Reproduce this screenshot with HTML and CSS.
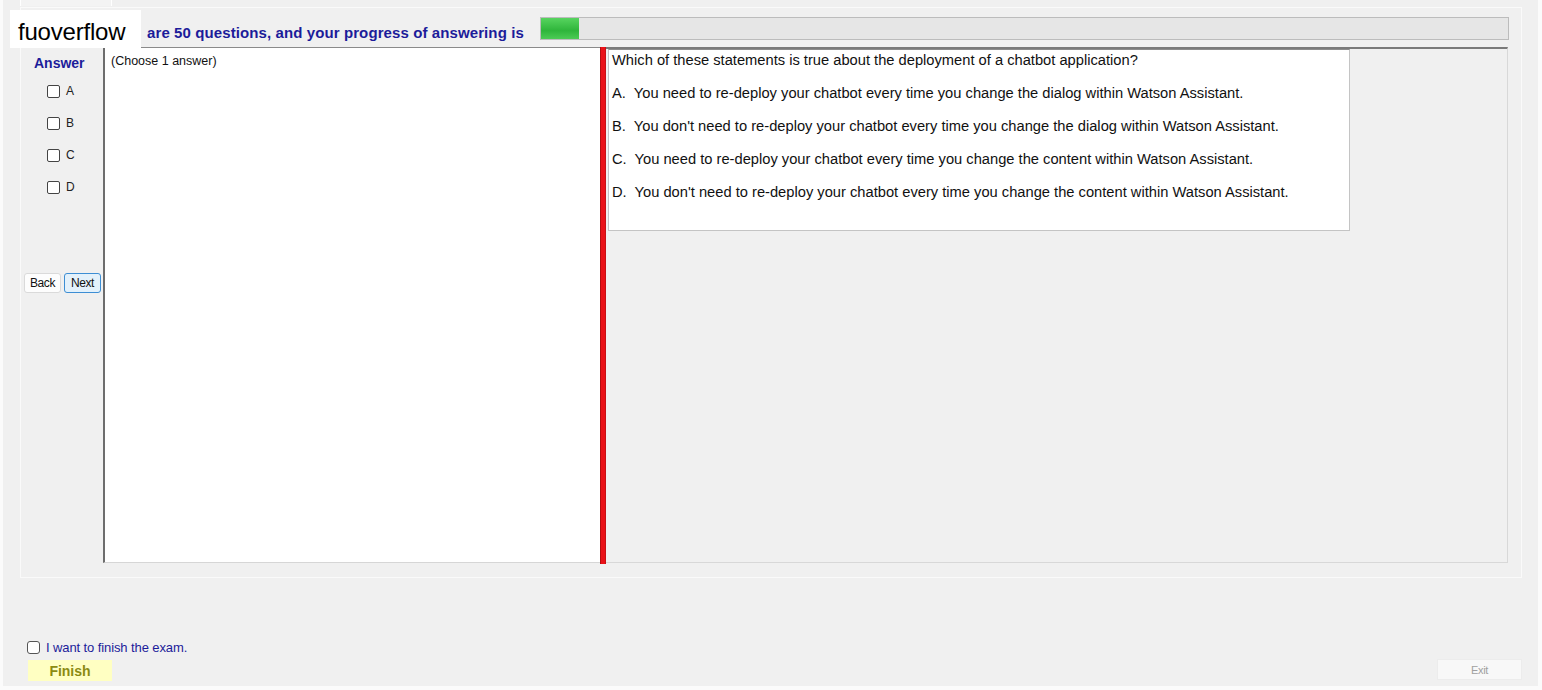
FILE: index.html
```html
<!DOCTYPE html>
<html lang="en">
<head>
    <meta charset="UTF-8">
    <title>Exam</title>
    <link rel="stylesheet" href="styles.css">
</head>
<body>
    <div class="window">
        <div class="tab"></div>

        <div class="panel">
            <div class="brand">fuoverflow</div>

            <div class="header">
                <span class="progress-text">are 50 questions, and your progress of answering is</span>
                <div class="progress"><div class="progress-fill" style="width: 38px"></div></div>
            </div>

            <div class="main">
                <div class="answers">
                    <div class="answers-title">Answer</div>
                    <label class="choice"><span class="box"></span>A</label>
                    <label class="choice"><span class="box"></span>B</label>
                    <label class="choice"><span class="box"></span>C</label>
                    <label class="choice"><span class="box"></span>D</label>
                    <div class="nav">
                        <button class="btn">Back</button>
                        <button class="btn btn-next">Next</button>
                    </div>
                </div>

                <div class="note">(Choose 1 answer)</div>

                <div class="splitter"></div>

                <div class="question-area">
                    <div class="question">
                        <p>Which of these statements is true about the deployment of a chatbot application?</p>
                        <p>A.&nbsp; You need to re-deploy your chatbot every time you change the dialog within Watson Assistant.</p>
                        <p>B.&nbsp; You don't need to re-deploy your chatbot every time you change the dialog within Watson Assistant.</p>
                        <p>C.&nbsp; You need to re-deploy your chatbot every time you change the content within Watson Assistant.</p>
                        <p>D.&nbsp; You don't need to re-deploy your chatbot every time you change the content within Watson Assistant.</p>
                    </div>
                </div>
            </div>
        </div>

        <div class="footer">
            <div class="finish-group">
                <label class="finish-check"><span class="box"></span>I want to finish the exam.</label>
                <button class="btn-finish">Finish</button>
            </div>
            <button class="btn-exit">Exit</button>
        </div>
    </div>
</body>
</html>
```

FILE: styles.css
```css
:root {
    --navy: #1c1c9a;
    --bg: #f0f0f0;
}

* {
    box-sizing: border-box;
}

body {
    margin: 0;
    background: #fbfbfb;
    font-family: 'Liberation Sans', Arial, sans-serif;
}

.window {
    position: relative;
    width: 1535px;
    height: 686px;
    margin-left: 3px;
    background: var(--bg);
    display: flex;
    flex-direction: column;
}

.tab {
    width: 92px;
    height: 6px;
    margin-left: 17px;
    border-left: 1px solid #fff;
    border-right: 1px solid #fff;
    background: #f3f3f3;
}

.panel {
    width: 1502px;
    height: 571px;
    margin: 1px 0 0 17px;
    border: 1px solid #fafafa;
    padding: 0 13px 0 1px;
}

/* watermark sits on top of the header text */
.brand {
    position: absolute;
    left: 7px;
    top: 10px;
    width: 131px;
    height: 38px;
    background: #fff;
    color: #000;
    font-size: 24px;
    line-height: 43px;
    padding-left: 8px;
    letter-spacing: -0.2px;
}

.header {
    height: 39px;
    display: flex;
    align-items: flex-start;
    padding-left: 125px;
}

.progress-text {
    flex: none;
    white-space: nowrap;
    margin-top: 16px;
    font-size: 15px;
    font-weight: bold;
    line-height: 17px;
    letter-spacing: 0.1px;
    color: var(--navy);
}

.progress {
    flex: none;
    width: 969px;
    height: 23px;
    margin: 9px 0 0 16px;
    background: #e6e6e6;
    border: 1px solid #bcbcbc;
}

.progress-fill {
    height: 100%;
    background: linear-gradient(#57d45f, #2fb53b 60%, #4ccb55);
}

.main {
    height: 516px;
    display: flex;
}

.answers {
    width: 81px;
    display: flex;
    flex-direction: column;
    padding-top: 8px;
}

.answers-title {
    margin-left: 12px;
    font-size: 14px;
    font-weight: bold;
    color: var(--navy);
    line-height: 16px;
    margin-bottom: 14px;
}

.choice {
    display: flex;
    height: 32px;
    align-items: flex-start;
    padding-left: 25px;
    font-size: 12px;
    color: #222;
    line-height: 13px;
}

.box {
    width: 13px;
    height: 13px;
    border: 1px solid #444;
    border-radius: 2px;
    background: #fff;
    margin-right: 6px;
}

.nav {
    display: flex;
    gap: 3px;
    margin: 60px 0 0 2px;
}

.btn {
    width: 37px;
    height: 20px;
    padding: 0;
    font-family: inherit;
    font-size: 12px;
    letter-spacing: -0.4px;
    color: #111;
    background: #fdfdfd;
    border: 1px solid #dadada;
    border-radius: 3px;
}

.btn-next {
    background: #e3f1fb;
    border-color: #3d8ed4;
}

.note {
    width: 497px;
    background: #fff;
    border-left: 2px solid #6d6d6d;
    border-top: 1px solid #8a8a8a;
    border-bottom: 1px solid #d6d6d6;
    padding: 6px 0 0 6px;
    font-size: 12.5px;
    color: #111;
}

.splitter {
    width: 6px;
    height: 517px;
    background: #ea1218;
    border-left: 1px solid #b30d10;
    border-right: 1px solid #c81015;
}

.question-area {
    flex: 1;
    border-top: 2px solid #7a7a7a;
    border-right: 1px solid #d8d8d8;
    border-bottom: 1px solid #d8d8d8;
    padding-left: 2px;
}

.question {
    width: 742px;
    height: 182px;
    background: #fff;
    border: 1px solid #c4c4c4;
    border-top-color: #8c8c8c;
    padding: 0 0 0 3px;
}

.question p {
    margin: 0 0 13px;
    font-size: 14.7px;
    line-height: 20px;
    color: #111;
}

.footer {
    flex: 1;
    display: flex;
    justify-content: space-between;
    align-items: flex-end;
    padding: 0 16px 5px 24px;
}

.finish-group {
    display: flex;
    flex-direction: column;
}

.finish-check {
    display: flex;
    align-items: center;
    font-size: 13px;
    letter-spacing: -0.1px;
    color: var(--navy);
    margin-bottom: 5px;
}

.finish-check .box {
    border-color: #555;
    border-radius: 3px;
}

.btn-finish {
    width: 84px;
    height: 21px;
    margin-left: 1px;
    padding: 0;
    border: none;
    background: #ffffc2;
    color: #8b8b12;
    font-family: inherit;
    font-size: 14px;
    font-weight: bold;
}

.btn-exit {
    width: 85px;
    height: 21px;
    margin-bottom: 1px;
    padding: 0;
    border: 1px solid #ececec;
    background: #f8f8f8;
    color: #a0a0a0;
    font-family: inherit;
    font-size: 11px;
    letter-spacing: -0.3px;
}
```
